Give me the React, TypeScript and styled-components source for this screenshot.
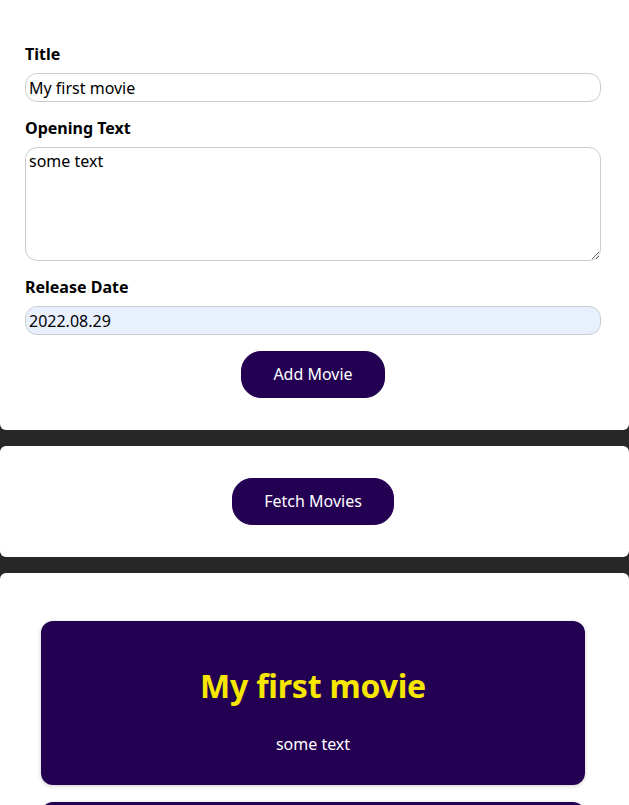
import styled, { createGlobalStyle } from "styled-components";

const GlobalStyle = createGlobalStyle`
  * {
    box-sizing: border-box;
  }

  body {
    margin: 0;
    background: #272727;
    font-family: "Noto Sans", "Liberation Sans", sans-serif;
    font-size: 16px;
  }
`;

const Page = styled.main`
  display: flex;
  flex-direction: column;
  gap: 16px;
  padding-bottom: 16px;
`;

const Section = styled.section<{ $top?: boolean }>`
  background: #fff;
  border-radius: ${(props) => (props.$top ? "0 0 6px 6px" : "6px")};
  padding: 32px 28px 32px 25px;
  text-align: center;
`;

const Form = styled.form`
  text-align: left;
  padding-top: 12px;
`;

const Control = styled.div`
  margin-bottom: 16px;
`;

const Label = styled.label`
  display: block;
  font-weight: bold;
  line-height: 21px;
  margin-bottom: 8px;
  color: #000;
`;

const Input = styled.input<{ $filled?: boolean }>`
  display: block;
  width: 100%;
  font: inherit;
  line-height: 21px;
  height: 29px;
  padding: 3px;
  border-radius: 12px;
  border: 1px solid #ccc;
  color: #000;
  background: ${(props) => (props.$filled ? "#e8f0fe" : "#fff")};
  outline: none;
`;

const TextArea = styled.textarea`
  display: block;
  width: 100%;
  height: 114px;
  font: inherit;
  line-height: 21px;
  padding: 3px;
  border-radius: 12px;
  border: 1px solid #ccc;
  color: #000;
  outline: none;
`;

const Actions = styled.div`
  display: flex;
  justify-content: center;
`;

const Button = styled.button`
  font: inherit;
  line-height: 21px;
  cursor: pointer;
  background: #230052;
  border: 1px solid #230052;
  color: #fff;
  padding: 12px 31px;
  border-radius: 20px;

  &:hover {
    background: #460080;
  }
`;

const MovieList = styled.ul`
  list-style: none;
  margin: 0;
  padding: 16px 0 0;
  display: flex;
  flex-direction: column;
  gap: 17px;
`;

const MovieItem = styled.li`
  margin: 0 16px;
  padding: 16px;
  border-radius: 12px;
  background: #230052;
  box-shadow: 0 1px 4px rgba(0, 0, 0, 0.2);
  color: #fff;
`;

const MovieTitle = styled.h2`
  margin: 29px 0 28px;
  font-size: 32px;
  line-height: 40px;
  font-weight: bold;
  letter-spacing: -0.2px;
  color: #f7e600;
`;

const MovieText = styled.p`
  margin: 0 0 14px;
  line-height: 21px;
`;

const movies = [
  { id: "m1", title: "My first movie", openingText: "some text" },
  { id: "m2", title: "My second movie", openingText: "more text" },
];

const App = () => {
  return (
    <>
      <GlobalStyle />
      <Page>
        <Section $top>
          <Form onSubmit={(e) => e.preventDefault()}>
            <Control>
              <Label htmlFor="title">Title</Label>
              <Input id="title" type="text" defaultValue="My first movie" />
            </Control>
            <Control>
              <Label htmlFor="opening-text">Opening Text</Label>
              <TextArea id="opening-text" defaultValue="some text" />
            </Control>
            <Control>
              <Label htmlFor="date">Release Date</Label>
              <Input id="date" type="text" defaultValue="2022.08.29" $filled />
            </Control>
            <Actions>
              <Button type="submit">Add Movie</Button>
            </Actions>
          </Form>
        </Section>

        <Section>
          <Button>Fetch Movies</Button>
        </Section>

        <Section>
          <MovieList>
            {movies.map((movie) => (
              <MovieItem key={movie.id}>
                <MovieTitle>{movie.title}</MovieTitle>
                <MovieText>{movie.openingText}</MovieText>
              </MovieItem>
            ))}
          </MovieList>
        </Section>
      </Page>
    </>
  );
};

export default App;
